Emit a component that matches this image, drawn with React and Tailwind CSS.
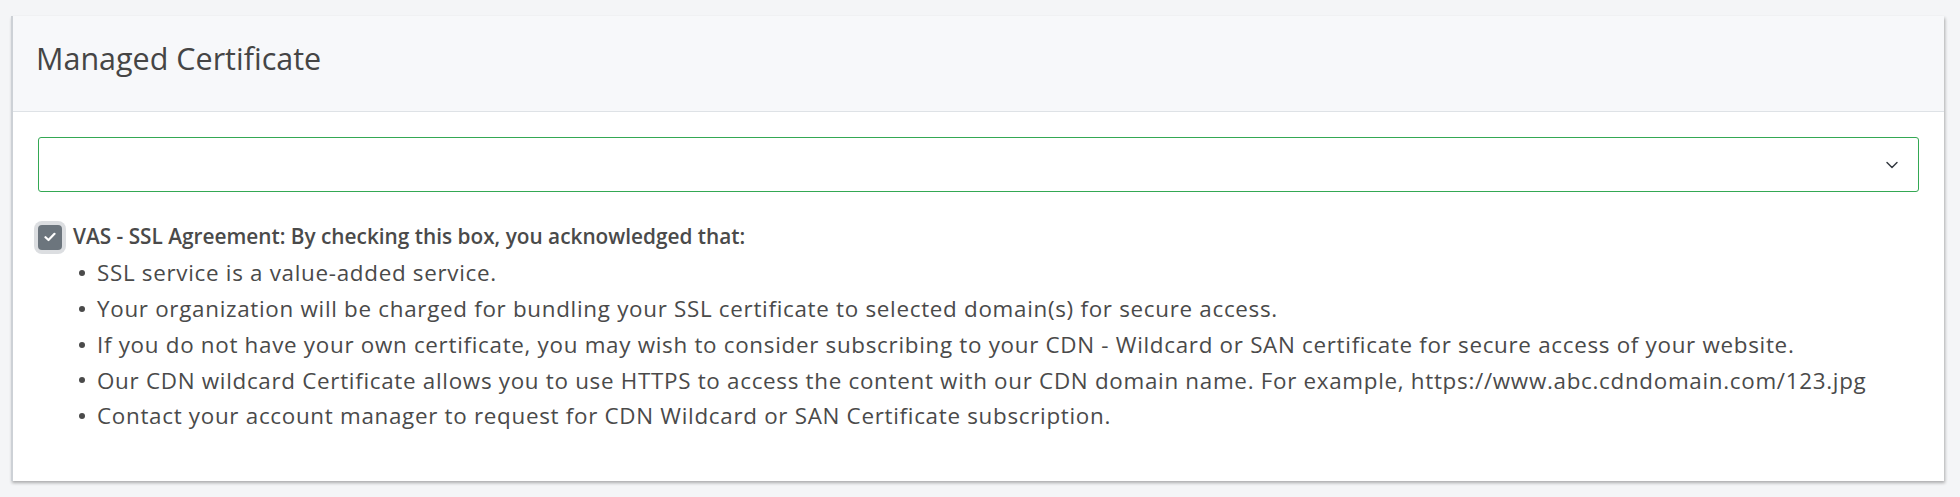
import { ChevronDown } from 'lucide-react';

const items = [
  'SSL service is a value-added service.',
  'Your organization will be charged for bundling your SSL certificate to selected domain(s) for secure access.',
  'If you do not have your own certificate, you may wish to consider subscribing to your CDN - Wildcard or SAN certificate for secure access of your website.',
  'Our CDN wildcard Certificate allows you to use HTTPS to access the content with our CDN domain name. For example, https://www.abc.cdndomain.com/123.jpg',
  'Contact your account manager to request for CDN Wildcard or SAN Certificate subscription.',
];

export default function App() {
  return (
    <div
      className="min-h-[497px] bg-[#f4f5f7] pt-[16px] pl-[11px] pr-[16px] text-[#4a4a4a]"
      style={{ fontFamily: '"Open Sans", Lato, sans-serif' }}
    >
      <div className="bg-white border-l-2 border-[#cdd1d6] shadow-[1px_2px_3px_rgba(0,0,0,0.3)]">
        <div className="h-[96px] bg-[#f7f8fa] border-b border-[#dee2e6] pl-[23px] flex items-center pb-[10px]">
          <h2 className="text-[30.5px] leading-none text-[#454545] font-normal">Managed Certificate</h2>
        </div>
        <div className="px-[25px] pt-[25px] pb-[47px]">
          <div className="h-[55px] border border-[#34a853] rounded-[3px] flex items-center justify-end pr-[16px]">
            <ChevronDown className="w-[20px] h-[20px] text-[#343a40]" strokeWidth={1.75} />
          </div>
          <div className="mt-[27px] flex items-center h-[36px]">
            <div className="w-[24px] h-[25px] rounded-[4px] bg-[#6c757d] ring-4 ring-[#dcdee1] flex items-center justify-center">
              <svg width="12" height="10" viewBox="0 0 12 10" fill="none">
                <path d="M1.5 5.2 L4.5 8 L10.5 1.8" stroke="white" strokeWidth="2.2" strokeLinecap="round" strokeLinejoin="round" />
              </svg>
            </div>
            <span className="ml-[11px] text-[20.8px] font-semibold text-[#4a4a4a]">
              VAS - SSL Agreement: By checking this box, you acknowledged that:
            </span>
          </div>
          <ul>
            {items.map((t) => (
              <li key={t} className="flex items-center h-[35.84px] text-[22.4px] tracking-[0.7px]">
                <span className="w-[6px] h-[6px] rounded-full bg-[#4a4a4a] ml-[41px] mr-[12px] shrink-0" />
                <span>{t}</span>
              </li>
            ))}
          </ul>
        </div>
      </div>
    </div>
  );
}
